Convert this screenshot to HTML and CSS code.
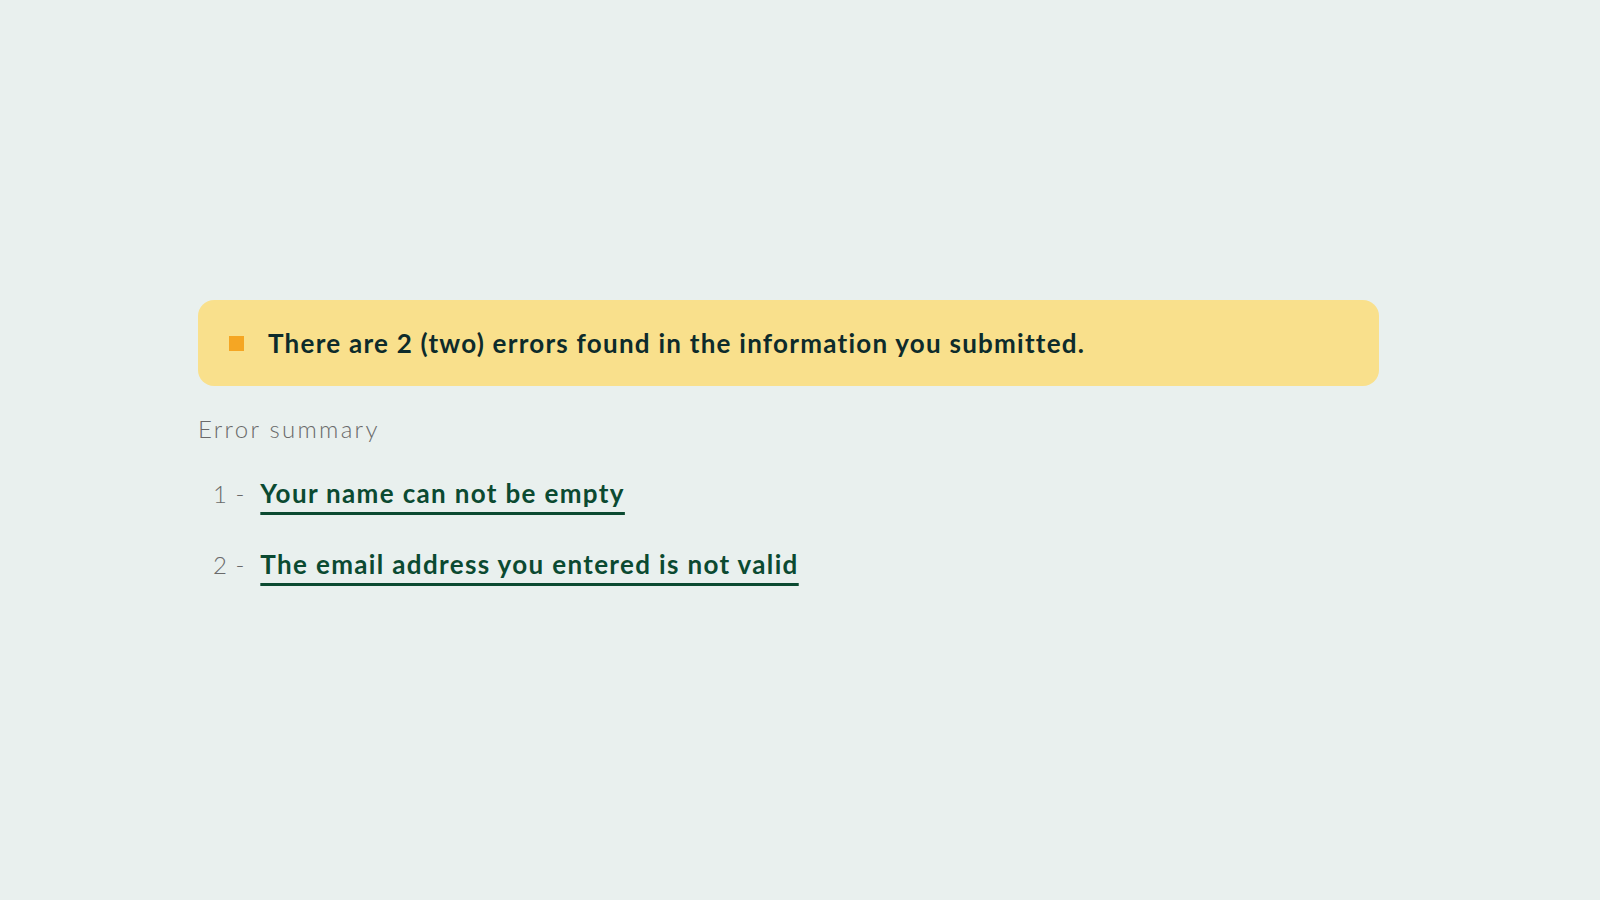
FILE: index.html
```html
<!DOCTYPE html>
<html lang="en">
<head>
<meta charset="utf-8">
<title>Error summary</title>
<link rel="stylesheet" href="styles.css">
</head>
<body>
<main class="page">
  <div class="alert" role="alert">
    <span class="alert-mark"></span>
    <p class="alert-text">There are 2 (two) errors found in the information you submitted.</p>
  </div>
  <h2 class="summary-title">Error summary</h2>
  <ol class="error-list">
    <li class="error-item"><span class="error-num">1 -</span><a class="error-link" href="#name">Your name can not be empty</a></li>
    <li class="error-item"><span class="error-num">2 -</span><a class="error-link" href="#email">The email address you entered is not valid</a></li>
  </ol>
</main>
</body>
</html>
```
FILE: styles.css
```css
* { box-sizing: border-box; }
html, body { margin: 0; padding: 0; }
body {
  background: #e9f0ee;
  font-family: Lato, "Open Sans", sans-serif;
  width: 1600px;
  height: 900px;
  overflow: hidden;
}
.page {
  padding: 300px 0 0 198px;
  width: 1379px;
}
.alert {
  display: flex;
  align-items: center;
  gap: 24px;
  height: 86px;
  padding: 0 31px;
  background: #f9e08c;
  border-radius: 16px;
}
.alert-mark {
  width: 15px;
  height: 15px;
  background: #f5a623;
  flex: none;
}
.alert-text {
  margin: 0;
  font-size: 26px;
  font-weight: 700;
  letter-spacing: 1.25px;
  color: #0d2b2b;
}
.summary-title {
  margin: 28px 0 0 0;
  font-size: 24px;
  font-weight: 300;
  letter-spacing: 2.3px;
  color: #6a6a6a;
  line-height: 30px;
}
.error-list {
  list-style: none;
  margin: 0;
  padding: 0 0 0 15px;
}
.error-item {
  display: flex;
  align-items: baseline;
  gap: 15px;
  margin-top: 31px;
  line-height: 36px;
}
.error-item + .error-item {
  margin-top: 34px;
}
.error-num {
  font-size: 24px;
  font-weight: 300;
  color: #6a6a6a;
  letter-spacing: 1px;
}
.error-link {
  font-size: 26px;
  font-weight: 700;
  letter-spacing: 1.35px;
  color: #0b4a31;
  text-decoration: underline;
  text-decoration-thickness: 3px;
  text-underline-offset: 9px;
}
```
